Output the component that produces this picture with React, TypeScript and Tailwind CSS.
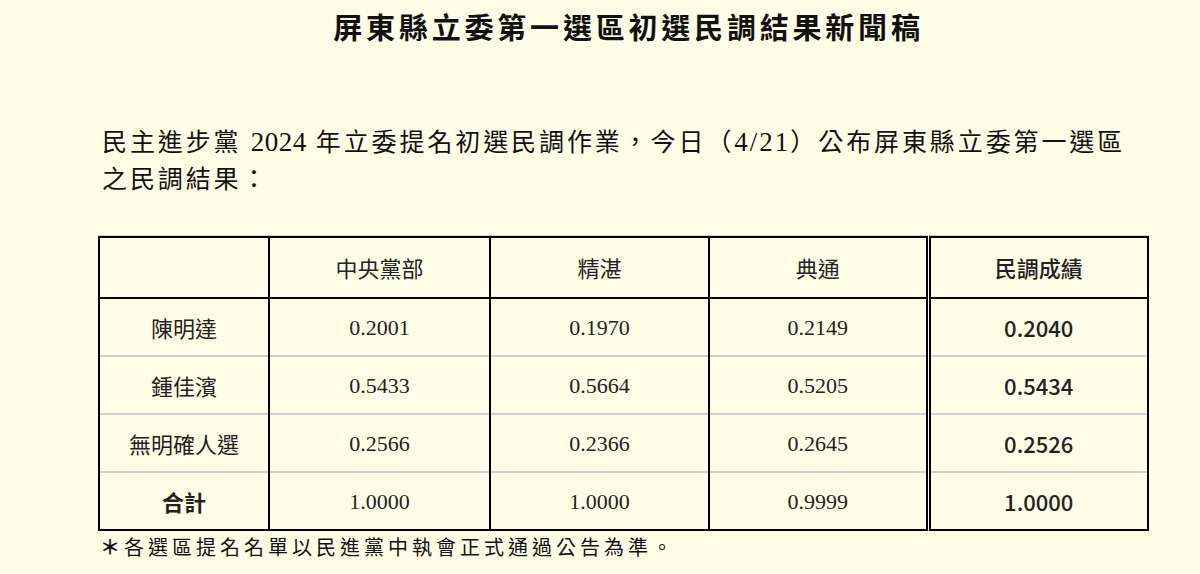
const rows = [
  { name: '陳明達', a: '0.2001', b: '0.1970', c: '0.2149', total: '0.2040' },
  { name: '鍾佳濱', a: '0.5433', b: '0.5664', c: '0.5205', total: '0.5434' },
  { name: '無明確人選', a: '0.2566', b: '0.2366', c: '0.2645', total: '0.2526' },
]

const serif = "font-['Liberation_Serif','Noto_Sans_CJK_TC',serif]"
const sans = "font-['Noto_Sans_CJK_TC','Noto_Sans',sans-serif]"

export default function App() {
  return (
    <div className="min-h-[574px] w-[1200px] bg-[#fffde6] text-[#111]">
      <div className="w-[1147px] pl-[98px]">
        <h1 className={`${sans} pl-[12px] pt-[6px] text-center text-[29px] font-bold leading-[40px] tracking-[3.8px]`}>
          屏東縣立委第一選區初選民調結果新聞稿
        </h1>

        <p className={`${serif} mt-[78px] pl-[4px] text-[25px] leading-[37px] tracking-[2.9px]`}>
          民主進步黨 <span className="text-[27px] tracking-[0.5px]">2024</span> 年立委提名初選民調作業，今日（
          <span className="text-[27px] tracking-[2px]">4/21</span>）公布屏東縣立委第一選區
          <br />
          之民調結果：
        </p>

        <table className="mt-[38px] w-[1049px] table-fixed border-collapse border-2 border-black text-[22px] text-[#222] shadow-[0_-1px_0_#cfcfcf]">
          <colgroup>
            <col className="w-[170px]" />
            <col className="w-[221px]" />
            <col className="w-[219px]" />
            <col className="w-[219px]" />
            <col className="w-[220px]" />
          </colgroup>
          <thead>
            <tr className={`${sans} h-[61px] border-b-2 border-black`}>
              <th className="border-x-2 border-black" />
              <th className="border-x-2 border-black font-normal">中央黨部</th>
              <th className="border-x-2 border-black font-normal">精湛</th>
              <th className="border-x-2 border-black font-normal">典通</th>
              <th className="border-l-[5px] border-r-2 border-double border-black font-medium">民調成績</th>
            </tr>
          </thead>
          <tbody>
            {rows.map((r) => (
              <tr key={r.name} className="h-[58px] border-b-2 border-[#cdced6]">
                <td className={`${sans} border-x-2 border-black text-center`}>{r.name}</td>
                <td className={`${serif} border-x-2 border-black text-center`}>{r.a}</td>
                <td className={`${serif} border-x-2 border-black text-center`}>{r.b}</td>
                <td className={`${serif} border-x-2 border-black text-center`}>{r.c}</td>
                <td className={`${sans} border-l-[5px] border-r-2 border-double border-black text-center font-medium`}>
                  {r.total}
                </td>
              </tr>
            ))}
            <tr className="h-[58px]">
              <td className={`${sans} border-x-2 border-black text-center font-bold`}>合計</td>
              <td className={`${serif} border-x-2 border-black text-center`}>1.0000</td>
              <td className={`${serif} border-x-2 border-black text-center`}>1.0000</td>
              <td className={`${serif} border-x-2 border-black text-center`}>0.9999</td>
              <td className={`${sans} border-l-[5px] border-r-2 border-double border-black text-center font-medium`}>
                1.0000
              </td>
            </tr>
          </tbody>
        </table>

        <p className={`${serif} pl-[2px] text-[20px] leading-[34px] tracking-[4px]`}>
          <span className="font-bold">＊</span>各選區提名名單以民進黨中執會正式通過公告為準。
        </p>
      </div>
    </div>
  )
}
